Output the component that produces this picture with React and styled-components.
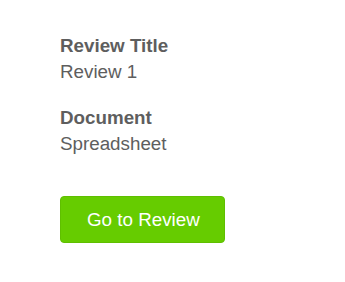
import React from 'react'
import styled, { createGlobalStyle } from 'styled-components'

const GlobalStyle = createGlobalStyle`
    body {
        margin: 0;
        background: #fff;
        font-family: "Liberation Sans", Arial, sans-serif;
    }
`

const Panel = styled.div`
    padding: 33px 60px;
    color: #5e5e5e;
    font-size: 18.8px;
    line-height: 26px;
`

const Field = styled.div`
    margin-bottom: 20px;
`

const Label = styled.div`
    font-weight: bold;
`

const Value = styled.div`
    font-weight: normal;
`

const Button = styled.button`
    margin-top: 19px;
    display: inline-block;
    padding: 10px 24px 10px 26px;
    font-family: inherit;
    font-size: 18.8px;
    line-height: 25px;
    color: #fff;
    background: #66cc00;
    border: 1px solid #5fbf00;
    border-radius: 4px;
    cursor: pointer;
`

const fields = [
    { label: 'Review Title', value: 'Review 1' },
    { label: 'Document', value: 'Spreadsheet' },
]

export default function App() {
    return (
        <>
            <GlobalStyle />
            <Panel>
                {fields.map(f => (
                    <Field key={f.label}>
                        <Label>{f.label}</Label>
                        <Value>{f.value}</Value>
                    </Field>
                ))}
                <Button>Go to Review</Button>
            </Panel>
        </>
    )
}
